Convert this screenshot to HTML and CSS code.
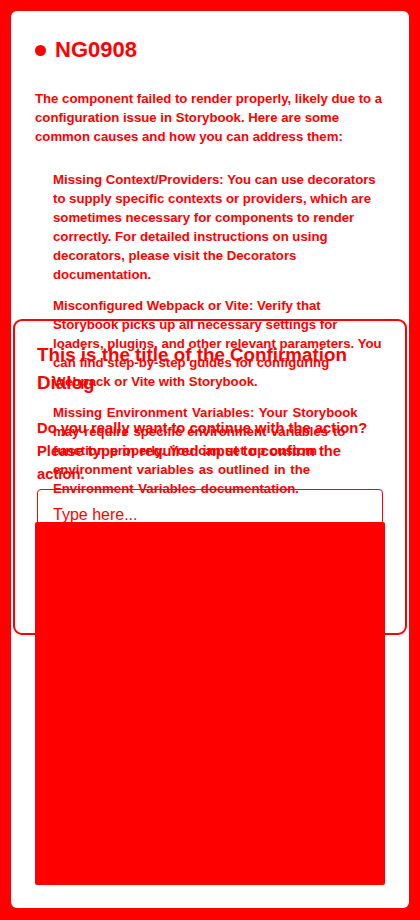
FILE: index.html
```html
<!DOCTYPE html>
<html lang="en">
<head>
<meta charset="utf-8">
<title>NG0908</title>
<link rel="stylesheet" href="styles.css">
</head>
<body>
  <main class="card">
    <h1 class="err-title"><span class="dot"></span>NG0908</h1>
    <p class="err-text">The component failed to render properly, likely due to a configuration issue in Storybook. Here are some common causes and how you can address them:</p>
    <ul class="causes">
      <li><strong>Missing Context/Providers</strong>: You can use decorators to supply specific contexts or providers, which are sometimes necessary for components to render correctly. For detailed instructions on using decorators, please visit the <a href="#">Decorators documentation</a>.</li>
      <li><strong>Misconfigured Webpack or Vite</strong>: Verify that Storybook picks up all necessary settings for loaders, plugins, and other relevant parameters. You can find step-by-step guides for configuring <a href="#">Webpack</a> or <a href="#">Vite</a> with Storybook.</li>
      <li class="cause-env"><strong>Missing Environment Variables</strong>: Your Storybook may require specific environment variables to function properly. You can set up custom environment variables as outlined in the <a href="#">Environment Variables documentation</a>.</li>
    </ul>
  </main>

  <section class="dialog" role="dialog">
    <h2 class="dialog-title">This is the title of the Confirmation Dialog</h2>
    <p class="dialog-text">Do you really want to continue with the action? Please type in required input to confirm the action.</p>
    <div class="input-box"><span class="placeholder">Type here...</span></div>
  </section>
  <div class="actions-block"></div>
</body>
</html>
```

FILE: styles.css
```css
* {
  box-sizing: border-box;
}

html, body {
  margin: 0;
  padding: 0;
}

body {
  background: #ff0000;
  padding: 11px;
  min-height: 920px;
  font-family: "Liberation Sans", Arial, sans-serif;
  color: #ff0000;
}

.card {
  background: #ffffff;
  border-radius: 6px;
  height: 897px;
  padding: 25px 24px 0 24px;
}

.err-title {
  display: flex;
  align-items: center;
  gap: 9px;
  margin: 0;
  font-size: 22px;
  line-height: 28px;
  font-weight: bold;
}

.dot {
  width: 11px;
  height: 11px;
  border-radius: 50%;
  background: #ff0000;
  flex: none;
}

.err-text {
  margin: 25px 0 0 0;
  font-size: 13.2px;
  line-height: 19px;
  font-weight: bold;
}

.causes {
  list-style: none;
  margin: 24px 0 0 0;
  padding: 0 0 0 18px;
  display: flex;
  flex-direction: column;
  gap: 12px;
  font-size: 13.2px;
  line-height: 19px;
  font-weight: bold;
}

.cause-env {
  word-spacing: 1px;
}

.causes a {
  color: inherit;
  text-decoration: none;
}

.dialog {
  position: absolute;
  left: 13px;
  top: 319px;
  width: 394px;
  height: 316px;
  border: 2px solid #ff0000;
  border-radius: 9px;
  padding: 20px 22px;
  background: transparent;
}

.dialog-title {
  margin: 0;
  font-size: 18.8px;
  line-height: 28px;
  font-weight: bold;
}

.dialog-text {
  margin: 20px 0 0 0;
  font-size: 14.75px;
  line-height: 23px;
  font-weight: bold;
}

.input-box {
  margin-top: 3px;
  height: 60px;
  border: 1px solid #ff0000;
  border-radius: 4px;
  padding: 15px 15px;
  font-size: 16px;
  line-height: 20px;
}

.placeholder {
  color: #ff0000;
}

.actions-block {
  position: absolute;
  left: 35px;
  top: 522px;
  width: 350px;
  height: 363px;
  background: #ff0000;
  border-radius: 2px;
}
```
